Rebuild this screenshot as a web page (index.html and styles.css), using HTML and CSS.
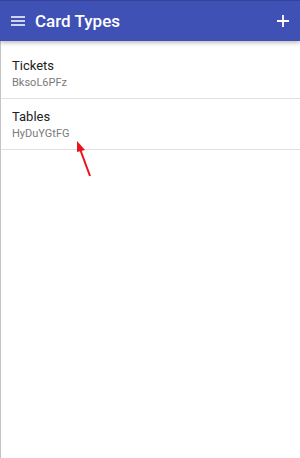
FILE: index.html
```html
<!DOCTYPE html>
<html>
<head>
    <link rel="stylesheet" href="styles.css">
</head>
<body>
    <div class="app">
        <header class="toolbar">
            <button class="icon-btn menu">
                <svg width="14" height="10" viewBox="0 0 14 10"><path d="M0 1h14M0 5h14M0 9h14" stroke="#fff" stroke-width="1.6"/></svg>
            </button>
            <h1 class="title">Card Types</h1>
            <button class="icon-btn add">
                <svg width="12" height="12" viewBox="0 0 12 12"><path d="M6 0v12M0 6h12" stroke="#fff" stroke-width="1.8"/></svg>
            </button>
        </header>
        <div class="list">
            <div class="list-item">
                <div class="name">Tickets</div>
                <div class="code">BksoL6PFz</div>
            </div>
            <div class="list-item">
                <div class="name">Tables</div>
                <div class="code">HyDuYGtFG</div>
            </div>
        </div>
    </div>
    <svg class="pointer" width="30" height="40" viewBox="0 0 30 40">
        <path d="M18 37L8 10" stroke="#e8131b" stroke-width="2"/>
        <path d="M5 2L13 11L5 13Z" fill="#e8131b"/>
    </svg>
</body>
</html>
```
FILE: styles.css
```css
body {
    margin: 0;
    font-family: Roboto, "Noto Sans", sans-serif;
    background: #fff;
}
.app {
    height: 458px;
    border-left: 1px solid #c4c4c4;
    box-sizing: border-box;
}
.toolbar {
    height: 41px;
    background: #3f51b5;
    border-top: 1px solid #35449a;
    box-sizing: border-box;
    display: flex;
    align-items: center;
    box-shadow: 0 2px 4px rgba(0,0,0,0.25);
    margin-left: -1px;
}
.icon-btn {
    background: none;
    border: none;
    padding: 0;
    display: flex;
    align-items: center;
    justify-content: center;
}
.menu {
    margin-left: 11px;
    width: 14px;
}
.title {
    margin: 0 0 0 10px;
    flex: 1;
    color: #fff;
    font-size: 17px;
    font-weight: 500;
}
.add {
    margin-right: 11px;
}
.list {
    padding-top: 7px;
}
.list-item {
    height: 51px;
    padding: 9px 11px 0;
    box-sizing: border-box;
    border-bottom: 1px solid #e0e0e0;
}
.name {
    font-size: 13px;
    color: #212121;
    line-height: 17px;
}
.code {
    font-size: 11px;
    color: #7a7a7a;
    line-height: 17px;
}
.pointer {
    position: absolute;
    left: 72px;
    top: 139px;
}
```
